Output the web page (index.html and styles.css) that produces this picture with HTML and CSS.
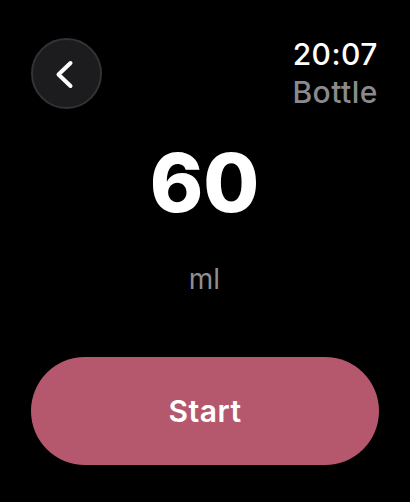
FILE: index.html
```html
<!DOCTYPE html>
<html lang="en">
<head>
  <meta charset="UTF-8">
  <meta name="viewport" content="width=device-width, initial-scale=1.0">
  <title>Bottle</title>
  <link rel="stylesheet" href="styles.css">
</head>
<body>
  <div class="screen">
    <div class="top-bar">
      <button class="back-btn" aria-label="Back">
        <svg width="71" height="71" viewBox="0 0 71 71">
          <path d="M39.5 25 L27.5 36.5 L39.5 48" fill="none" stroke="#fff" stroke-width="4" stroke-linecap="round" stroke-linejoin="round"/>
        </svg>
      </button>
      <div class="status">
        <div class="time">20:07</div>
        <div class="title">Bottle</div>
      </div>
    </div>

    <div class="amount">60</div>
    <div class="unit">ml</div>

    <button class="start-btn">Start</button>
  </div>
</body>
</html>
```

FILE: styles.css
```css
/* Global Styles */
* {
  margin: 0;
  padding: 0;
  box-sizing: border-box;
  font-family: 'Inter', 'Noto Sans', sans-serif;
}

body {
  background: #000;
  width: 410px;
  height: 502px;
  overflow: hidden;
}

.screen {
  display: flex;
  flex-direction: column;
  padding: 0 32px 0 31px;
}

/* Top bar */
.top-bar {
  display: flex;
  justify-content: space-between;
  align-items: flex-start;
}

.back-btn {
  width: 71px;
  height: 71px;
  margin-top: 38px;
  border-radius: 50%;
  background: #1c1c1e;
  border: 2px solid #333336;
  display: flex;
  align-items: center;
  justify-content: center;
}

.back-btn svg {
  display: block;
  flex-shrink: 0;
}

.status {
  padding-top: 36px;
  text-align: right;
}

.time {
  color: #fff;
  font-size: 30px;
  font-weight: 500;
  line-height: 36px;
  letter-spacing: 0.5px;
}

.title {
  color: #8a8a8e;
  font-size: 30px;
  font-weight: 500;
  line-height: 40px;
  letter-spacing: 0.5px;
}

/* Amount */
.amount {
  margin-top: 31px;
  color: #fff;
  font-size: 81px;
  font-weight: 800;
  line-height: 80px;
  text-align: center;
}

.unit {
  margin-top: 39px;
  color: #8e8e93;
  font-size: 28px;
  line-height: 34px;
  text-align: center;
}

/* Start button */
.start-btn {
  margin-top: 61px;
  height: 108px;
  width: 348px;
  border: none;
  border-radius: 54px;
  background: #b5586e;
  color: #fff;
  font-size: 30px;
  font-weight: 600;
  letter-spacing: 0.5px;
  display: flex;
  align-items: center;
  justify-content: center;
}
```
